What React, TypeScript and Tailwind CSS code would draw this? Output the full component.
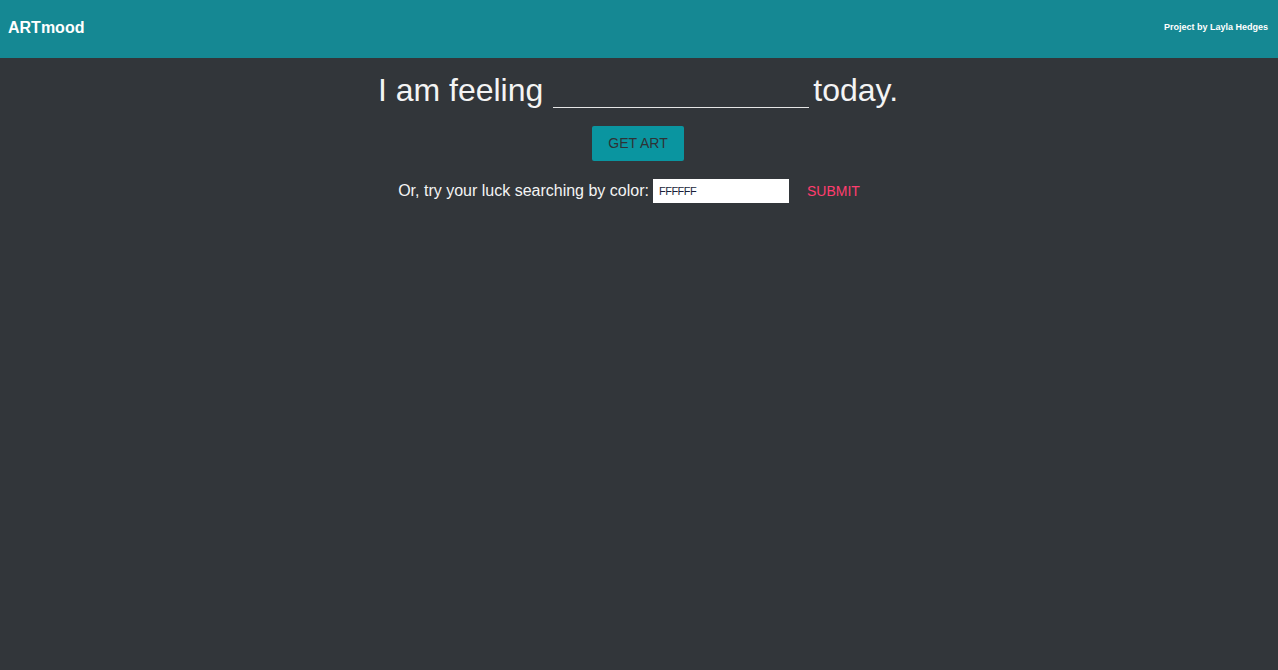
import { useState } from "react";

export default function App() {
  const [mood, setMood] = useState("");
  const [color, setColor] = useState("FFFFFF");

  return (
    <div className="min-h-screen w-full bg-[#32363a] font-['Liberation_Sans',Arial,sans-serif]">

      {/* header */}
      <header className="flex h-[58px] items-center justify-between bg-[#158893] pb-[2px] pl-[8px] pr-[10px]">
        <span className="text-[16px] font-bold text-white">ARTmood</span>
        <span className="text-[9px] font-bold text-white">Project by Layla Hedges</span>
      </header>

      {/* mood form */}
      <main className="flex flex-col items-center">
        <div className="mt-[14px] flex items-baseline pr-[2px] text-[32px] leading-[37px] text-[#f4f4f4]">
          <span>I am feeling</span>
          <input
            value={mood}
            onChange={(e) => setMood(e.target.value)}
            className="ml-[10px] mr-[4px] h-[30px] w-[256px] border-0 border-b border-[#e5e5e5] bg-transparent text-[24px] text-white outline-none"
          />
          <span>today.</span>
        </div>

        <button className="mt-[17px] mr-[2px] h-[35px] w-[92px] rounded-[2px] bg-[#0a95a0] text-[14px] text-[#2e3236]">
          GET ART
        </button>

        <div className="mt-[18px] flex items-center pr-[4px] text-[16px] text-[#f4f4f4]">
          <span>Or, try your luck searching by color:</span>
          <input
            value={color}
            onChange={(e) => setColor(e.target.value)}
            className="ml-[4px] h-[24px] w-[136px] bg-white px-[6px] text-[11px] tracking-[-0.5px] text-[#1a1f3a] outline-none"
          />
          <button className="ml-[2px] px-[16px] text-[14px] text-[#ff3d6e]">
            SUBMIT
          </button>
        </div>
      </main>

    </div>
  );
}
